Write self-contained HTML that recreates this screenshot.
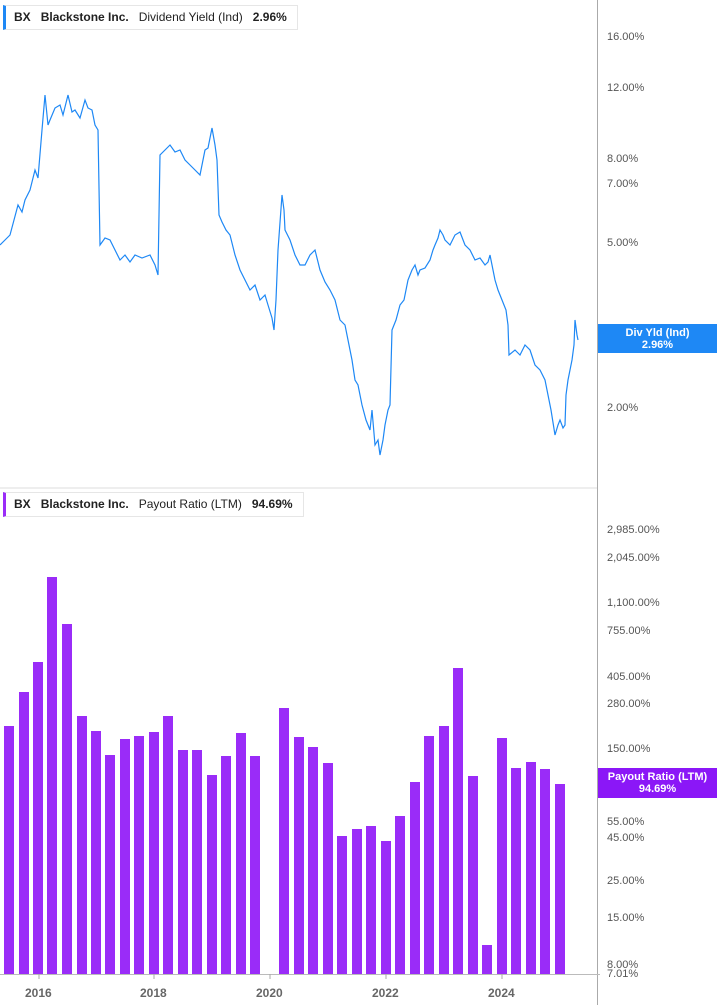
<!DOCTYPE html>
<html><head><meta charset="utf-8"><style>
body{margin:0;width:717px;height:1005px;background:#fff;font-family:"Liberation Sans",sans-serif;overflow:hidden;position:relative}
.lg{position:absolute;left:3px;height:23px;border:1px solid #e6e6e6;border-left:3px solid #1e88f5;background:#fff;font-size:12px;color:#222;line-height:23px;padding:0 10px 0 8px;white-space:nowrap}
.lg b{font-weight:bold}
.ax{position:absolute;font-size:11px;color:#555;left:607px}
.tk{position:absolute;left:598px;width:3px;height:1px;background:#777}
.xl{position:absolute;top:986px;font-size:12px;font-weight:bold;color:#666}
.box{position:absolute;left:598px;width:119px;color:#fff;font-size:11px;font-weight:bold;text-align:center;line-height:12px;padding-top:3px;box-sizing:border-box}
</style></head><body>
<svg width="717" height="1005" style="position:absolute;left:0;top:0">
<line x1="597.5" y1="0" x2="597.5" y2="1005" stroke="#aaa"/>
<line x1="0" y1="488" x2="597" y2="488" stroke="#ddd"/>
<line x1="0" y1="974.5" x2="600" y2="974.5" stroke="#bbb"/>
<g stroke="#aaa"><line x1="39" y1="974" x2="39" y2="979"/><line x1="154" y1="974" x2="154" y2="979"/><line x1="270" y1="974" x2="270" y2="979"/><line x1="386" y1="974" x2="386" y2="979"/><line x1="502" y1="974" x2="502" y2="979"/></g>
<polyline fill="none" stroke="#1e88f5" stroke-width="1.2" points="0,245 5,240 10,235 14,220 18,205 22,212 25,200 30,190 35,170 38,178 42,130 45,95 48,125 50,120 55,108 60,105 63,115 68,95 72,112 75,110 80,118 85,100 88,108 92,110 95,125 98,130 100,245 105,238 110,240 115,250 120,260 125,255 130,262 135,255 142,258 150,255 155,265 158,275 160,155 165,150 170,145 175,152 180,150 185,160 190,165 195,170 200,175 203,160 205,150 208,148 212,128 215,145 217,160 219,215 222,222 226,230 230,235 235,255 240,270 245,280 250,290 255,285 260,300 265,295 268,305 272,318 274,330 276,300 278,250 282,195 284,210 285,230 290,240 295,255 300,265 305,265 310,255 315,250 318,262 320,270 325,282 330,290 335,300 340,320 345,325 348,340 352,360 355,380 358,385 362,405 366,420 370,430 372,410 375,445 378,440 380,455 383,440 385,425 388,410 390,405 392,330 396,320 400,305 404,300 408,280 412,270 415,265 418,275 420,270 425,268 430,260 433,250 435,245 438,238 440,230 443,235 445,240 450,245 455,235 460,232 465,245 470,250 475,260 480,258 485,265 488,262 490,255 493,270 495,280 498,290 502,300 506,310 508,325 509,355 515,350 520,355 525,345 530,350 535,365 540,370 545,380 548,395 551,410 555,435 558,425 560,420 563,428 565,425 566,395 568,380 570,370 572,360 574,345 575,320 577,335 578,340"/>
<g fill="#9a2cf8">
<rect x="4" y="726" width="10" height="248"/><rect x="19" y="692" width="10" height="282"/><rect x="33" y="662" width="10" height="312"/><rect x="47" y="577" width="10" height="397"/><rect x="62" y="624" width="10" height="350"/><rect x="77" y="716" width="10" height="258"/><rect x="91" y="731" width="10" height="243"/><rect x="105" y="755" width="10" height="219"/><rect x="120" y="739" width="10" height="235"/><rect x="134" y="736" width="10" height="238"/><rect x="149" y="732" width="10" height="242"/><rect x="163" y="716" width="10" height="258"/><rect x="178" y="750" width="10" height="224"/><rect x="192" y="750" width="10" height="224"/><rect x="207" y="775" width="10" height="199"/><rect x="221" y="756" width="10" height="218"/><rect x="236" y="733" width="10" height="241"/><rect x="250" y="756" width="10" height="218"/>
<rect x="279" y="708" width="10" height="266"/><rect x="294" y="737" width="10" height="237"/><rect x="308" y="747" width="10" height="227"/><rect x="323" y="763" width="10" height="211"/><rect x="337" y="836" width="10" height="138"/><rect x="352" y="829" width="10" height="145"/><rect x="366" y="826" width="10" height="148"/><rect x="381" y="841" width="10" height="133"/><rect x="395" y="816" width="10" height="158"/><rect x="410" y="782" width="10" height="192"/><rect x="424" y="736" width="10" height="238"/><rect x="439" y="726" width="10" height="248"/><rect x="453" y="668" width="10" height="306"/><rect x="468" y="776" width="10" height="198"/><rect x="482" y="945" width="10" height="29"/><rect x="497" y="738" width="10" height="236"/><rect x="511" y="768" width="10" height="206"/><rect x="526" y="762" width="10" height="212"/><rect x="540" y="769" width="10" height="205"/><rect x="555" y="784" width="10" height="190"/>
</g></svg>
<div class="lg" style="top:5px"><b>BX</b>&nbsp;&nbsp;&nbsp;<b>Blackstone Inc.</b>&nbsp;&nbsp;&nbsp;Dividend Yield (Ind)&nbsp;&nbsp;&nbsp;<b>2.96%</b></div>
<div class="lg" style="top:492px;border-left-color:#9a2cf8"><b>BX</b>&nbsp;&nbsp;&nbsp;<b>Blackstone Inc.</b>&nbsp;&nbsp;&nbsp;Payout Ratio (LTM)&nbsp;&nbsp;&nbsp;<b>94.69%</b></div>
<div class="ax" style="top:31px">16.00%</div><div class="ax" style="top:82px">12.00%</div><div class="ax" style="top:153px">8.00%</div><div class="ax" style="top:178px">7.00%</div><div class="ax" style="top:237px">5.00%</div><div class="ax" style="top:402px">2.00%</div>
<div class="ax" style="top:524px">2,985.00%</div><div class="ax" style="top:552px">2,045.00%</div><div class="ax" style="top:597px">1,100.00%</div><div class="ax" style="top:625px">755.00%</div><div class="ax" style="top:671px">405.00%</div><div class="ax" style="top:698px">280.00%</div><div class="ax" style="top:743px">150.00%</div><div class="ax" style="top:816px">55.00%</div><div class="ax" style="top:832px">45.00%</div><div class="ax" style="top:875px">25.00%</div><div class="ax" style="top:912px">15.00%</div><div class="ax" style="top:959px">8.00%</div><div class="ax" style="top:968px">7.01%</div>
<div class="box" style="top:324px;height:29px;background:#1e88f5">Div Yld (Ind)<br>2.96%</div>
<div class="box" style="top:768px;height:30px;background:#8b17f7">Payout Ratio (LTM)<br>94.69%</div>
<div class="xl" style="left:25px">2016</div><div class="xl" style="left:140px">2018</div><div class="xl" style="left:256px">2020</div><div class="xl" style="left:372px">2022</div><div class="xl" style="left:488px">2024</div>
</body></html>
